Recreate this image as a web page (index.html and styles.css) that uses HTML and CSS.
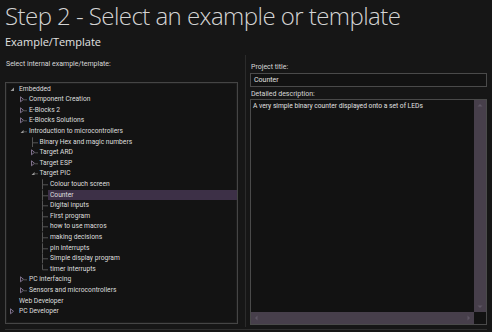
FILE: index.html
```html
<!DOCTYPE html>
<html>
<head>
<meta charset="utf-8">
<link rel="stylesheet" href="styles.css">
</head>
<body>
<div class="page">
  <h1 class="title">Step 2 - Select an example or template</h1>
  <div class="subtitle">Example/Template</div>
  <div class="panes">
    <div class="left">
      <div class="label left-label">Select internal example/template:</div>
      <div class="tree">
        <div class="row l0"><span class="ico"><svg width="8" height="10" viewBox="0 0 8 10"><path d="M1.5 6.8 L5 3.3 L5 6.8 Z" fill="#9a9a9a"/></svg></span><span class="txt">Embedded</span></div>
        <div class="row l1"><span class="ico"><svg width="8" height="10" viewBox="0 0 8 10"><path d="M1.5 2.5 L4.5 5 L1.5 7.5 Z" fill="none" stroke="#8a7b98" stroke-width="0.9"/><path d="M4.5 5.5 H8" stroke="#555" stroke-width="1"/></svg></span><span class="txt">Component Creation</span></div>
        <div class="row l1"><span class="ico"><svg width="8" height="10" viewBox="0 0 8 10"><path d="M1.5 2.5 L4.5 5 L1.5 7.5 Z" fill="none" stroke="#8a7b98" stroke-width="0.9"/><path d="M4.5 5.5 H8" stroke="#555" stroke-width="1"/></svg></span><span class="txt">E-Blocks 2</span></div>
        <div class="row l1"><span class="ico"><svg width="8" height="10" viewBox="0 0 8 10"><path d="M1.5 2.5 L4.5 5 L1.5 7.5 Z" fill="none" stroke="#8a7b98" stroke-width="0.9"/><path d="M4.5 5.5 H8" stroke="#555" stroke-width="1"/></svg></span><span class="txt">E-Blocks Solutions</span></div>
        <div class="row l1"><span class="ico"><svg width="8" height="10" viewBox="0 0 8 10"><path d="M1.5 6.8 L4.6 3.7 L4.6 6.8 Z" fill="#9a9a9a"/><path d="M5 5.5 H8" stroke="#555" stroke-width="1"/></svg></span><span class="txt">Introduction to microcontrollers</span></div>
        <div class="row l2 leaf"><span class="ico"><svg width="8" height="10" viewBox="0 0 8 10"><path d="M2.5 0 V10 M2.5 5.5 H8" stroke="#555" stroke-width="1"/></svg></span><span class="txt">Binary Hex and magic numbers</span></div>
        <div class="row l2"><span class="ico"><svg width="8" height="10" viewBox="0 0 8 10"><path d="M1.5 2.5 L4.5 5 L1.5 7.5 Z" fill="none" stroke="#8a7b98" stroke-width="0.9"/><path d="M4.5 5.5 H8" stroke="#555" stroke-width="1"/></svg></span><span class="txt">Target ARD</span></div>
        <div class="row l2"><span class="ico"><svg width="8" height="10" viewBox="0 0 8 10"><path d="M1.5 2.5 L4.5 5 L1.5 7.5 Z" fill="none" stroke="#8a7b98" stroke-width="0.9"/><path d="M4.5 5.5 H8" stroke="#555" stroke-width="1"/></svg></span><span class="txt">Target ESP</span></div>
        <div class="row l2"><span class="ico"><svg width="8" height="10" viewBox="0 0 8 10"><path d="M1.5 6.8 L4.6 3.7 L4.6 6.8 Z" fill="#9a9a9a"/><path d="M5 5.5 H8" stroke="#555" stroke-width="1"/></svg></span><span class="txt">Target PIC</span></div>
        <div class="row l3 leaf"><span class="ico"><svg width="8" height="10" viewBox="0 0 8 10"><path d="M2.5 0 V10 M2.5 5.5 H8" stroke="#555" stroke-width="1"/></svg></span><span class="txt">Colour touch screen</span></div>
        <div class="row l3 leaf selected"><span class="ico"><svg width="8" height="10" viewBox="0 0 8 10"><path d="M2.5 0 V10 M2.5 5.5 H8" stroke="#555" stroke-width="1"/></svg></span><span class="txt">Counter</span></div>
        <div class="row l3 leaf"><span class="ico"><svg width="8" height="10" viewBox="0 0 8 10"><path d="M2.5 0 V10 M2.5 5.5 H8" stroke="#555" stroke-width="1"/></svg></span><span class="txt">Digital inputs</span></div>
        <div class="row l3 leaf"><span class="ico"><svg width="8" height="10" viewBox="0 0 8 10"><path d="M2.5 0 V10 M2.5 5.5 H8" stroke="#555" stroke-width="1"/></svg></span><span class="txt">First program</span></div>
        <div class="row l3 leaf"><span class="ico"><svg width="8" height="10" viewBox="0 0 8 10"><path d="M2.5 0 V10 M2.5 5.5 H8" stroke="#555" stroke-width="1"/></svg></span><span class="txt">how to use macros</span></div>
        <div class="row l3 leaf"><span class="ico"><svg width="8" height="10" viewBox="0 0 8 10"><path d="M2.5 0 V10 M2.5 5.5 H8" stroke="#555" stroke-width="1"/></svg></span><span class="txt">making decisions</span></div>
        <div class="row l3 leaf"><span class="ico"><svg width="8" height="10" viewBox="0 0 8 10"><path d="M2.5 0 V10 M2.5 5.5 H8" stroke="#555" stroke-width="1"/></svg></span><span class="txt">pin interrupts</span></div>
        <div class="row l3 leaf"><span class="ico"><svg width="8" height="10" viewBox="0 0 8 10"><path d="M2.5 0 V10 M2.5 5.5 H8" stroke="#555" stroke-width="1"/></svg></span><span class="txt">Simple display program</span></div>
        <div class="row l3 leaf"><span class="ico"><svg width="8" height="10" viewBox="0 0 8 10"><path d="M2.5 0 V5.5 H8" fill="none" stroke="#555" stroke-width="1"/></svg></span><span class="txt">timer interrupts</span></div>
        <div class="row l1"><span class="ico"><svg width="8" height="10" viewBox="0 0 8 10"><path d="M1.5 2.5 L4.5 5 L1.5 7.5 Z" fill="none" stroke="#8a7b98" stroke-width="0.9"/><path d="M4.5 5.5 H8" stroke="#555" stroke-width="1"/></svg></span><span class="txt">PC interfacing</span></div>
        <div class="row l1"><span class="ico"><svg width="8" height="10" viewBox="0 0 8 10"><path d="M1.5 2.5 L4.5 5 L1.5 7.5 Z" fill="none" stroke="#8a7b98" stroke-width="0.9"/><path d="M4.5 5.5 H8" stroke="#555" stroke-width="1"/></svg></span><span class="txt">Sensors and microcontrollers</span></div>
        <div class="row l0"><span class="ico"></span><span class="txt">Web Developer</span></div>
        <div class="row l0"><span class="ico"><svg width="8" height="10" viewBox="0 0 8 10"><path d="M1.5 2.5 L4.5 5 L1.5 7.5 Z" fill="none" stroke="#8a7b98" stroke-width="0.9"/></svg></span><span class="txt">PC Developer</span></div>
      </div>
    </div>
    <div class="right">
      <div class="label r-label1">Project title:</div>
      <div class="input">Counter</div>
      <div class="label r-label2">Detailed description:</div>
      <div class="desc">
        <div class="desc-main">
          <div class="desc-text">A very simple binary counter displayed onto a set of LEDs</div>
          <div class="vscroll">
            <svg class="arr" width="12" height="8" viewBox="0 0 12 8"><path d="M3.5 5.5 L6 3 L8.5 5.5 Z" fill="#5e5664"/></svg>
            <svg class="arr" width="12" height="8" viewBox="0 0 12 8"><path d="M3.5 2.5 L6 5 L8.5 2.5 Z" fill="#5e5664"/></svg>
          </div>
        </div>
        <div class="hrow">
          <div class="hscroll">
            <svg class="arr" width="8" height="12" viewBox="0 0 8 12"><path d="M5.5 3.5 L3 6 L5.5 8.5 Z" fill="#5e5664"/></svg>
            <svg class="arr" width="8" height="12" viewBox="0 0 8 12"><path d="M2.5 3.5 L5 6 L2.5 8.5 Z" fill="#5e5664"/></svg>
          </div>
          <div class="corner"></div>
        </div>
      </div>
    </div>
  </div>
  <div class="bottom-line"></div>
</div>
</body>
</html>
```
FILE: styles.css
```css
html, body {
  margin: 0;
  padding: 0;
  background: #161616;
}
.page {
  width: 492px;
  height: 332px;
  overflow: hidden;
  background: #161616;
  color: #dedede;
  font-family: "Liberation Sans", Arial, sans-serif;
}
.title {
  margin: 0;
  padding: 2px 0 0 5px;
  height: 30px;
  font-family: "Open Sans", sans-serif;
  font-weight: 300;
  font-size: 24px;
  line-height: 28px;
  letter-spacing: -0.55px;
  color: #d4d4d4;
  white-space: nowrap;
}
.subtitle {
  padding-left: 5px;
  padding-top: 2px;
  height: 21px;
  font-family: "Open Sans", sans-serif;
  font-size: 11px;
  line-height: 16px;
  color: #e2e2e2;
}
.panes {
  display: flex;
  height: 272px;
}
.left {
  width: 245px;
  padding-left: 5px;
  box-sizing: border-box;
}
.label {
  font-family: Roboto, "Liberation Sans", sans-serif;
  font-size: 7px;
  line-height: 9px;
  color: #d8d8d8;
  white-space: nowrap;
}
.left-label {
  padding: 5px 0 0 1px;
  height: 27px;
  box-sizing: border-box;
}
.tree {
  width: 233px;
  height: 242px;
  box-sizing: border-box;
  border: 1px solid #454545;
  box-shadow: inset 0 0 0 1px #1c1c1c;
  background: #131313;
  padding-top: 0.5px;
  font-family: Roboto, "Liberation Sans", sans-serif;
  font-size: 6.7px;
  color: #dedede;
}
.row {
  display: flex;
  height: 10.62px;
  line-height: 10.62px;
  white-space: nowrap;
}
.row.l0 { padding-left: 3px; }
.row.l1 { padding-left: 13px; }
.row.l2 { padding-left: 23.5px; }
.row.l3 { padding-left: 34px; }
.ico {
  width: 8px;
  flex: none;
  display: flex;
  align-items: center;
}
.ico svg { display: block; height: 100%; }
.txt {
  flex: 1;
  padding-left: 2px;
}
.row.selected .txt {
  background: #3d3047;
}
.right {
  flex: 1;
  padding-left: 4px;
  padding-right: 5px;
  border-left: 1px solid #2b2b2b;
}
.r-label1 {
  padding: 8px 0 0 1px;
  height: 18px;
  box-sizing: border-box;
}
.input {
  height: 14px;
  box-sizing: border-box;
  border: 1px solid #4a4a4a;
  background: #121212;
  font-family: Roboto, "Liberation Sans", sans-serif;
  font-size: 7px;
  line-height: 12px;
  padding-left: 3px;
  color: #e0e0e0;
}
.r-label2 {
  padding: 3px 0 0 1px;
  height: 12px;
  box-sizing: border-box;
}
.desc {
  height: 226px;
  box-sizing: border-box;
  border: 1px solid #4a4a4a;
  background: #121212;
  display: flex;
  flex-direction: column;
}
.desc-main {
  flex: 1;
  display: flex;
}
.desc-text {
  flex: 1;
  font-family: Roboto, "Liberation Sans", sans-serif;
  font-size: 6.7px;
  line-height: 10px;
  padding: 1px 0 0 2px;
  color: #e0e0e0;
}
.vscroll {
  width: 12px;
  background: #473f4b;
  display: flex;
  flex-direction: column;
  justify-content: space-between;
  padding: 1px 0;
}
.hrow {
  height: 12px;
  display: flex;
}
.hscroll {
  flex: 1;
  background: #473f4b;
  display: flex;
  justify-content: space-between;
  padding: 0 1px;
}
.arr { display: block; }
.corner {
  width: 12px;
  background: #121212;
}
.bottom-line {
  margin: 2px 5px 0 5px;
  height: 1px;
  background: #2f2f2f;
}
```
